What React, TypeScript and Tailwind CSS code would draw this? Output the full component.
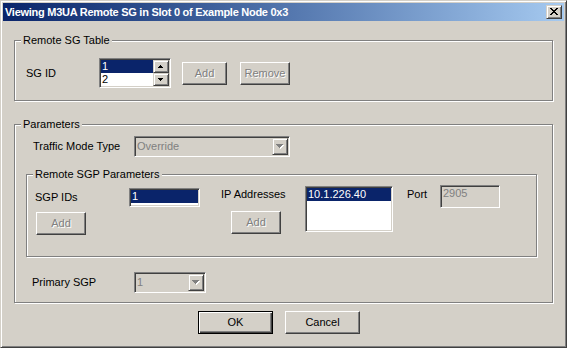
import React from "react";

const FONT = "font-['Liberation_Sans',Arial,sans-serif]";
const SUNKEN =
  "border border-t-[#808080] border-l-[#808080] border-r-white border-b-white shadow-[inset_1px_1px_0_#404040,inset_-1px_-1px_0_#d4d0c8] p-[1px]";
const RAISED =
  "border border-t-[#d4d0c8] border-l-[#d4d0c8] border-r-[#404040] border-b-[#404040] shadow-[inset_1px_1px_0_#fff,inset_-1px_-1px_0_#808080] bg-[#d4d0c8]";
const BUTTON =
  "border border-t-white border-l-white border-r-[#404040] border-b-[#404040] shadow-[inset_-1px_-1px_0_#808080] bg-[#d4d0c8]";
const DISABLED_TEXT = "text-[#808080] [text-shadow:1px_1px_0_#fff]";

const Arrow = ({ dir, w, disabled }: { dir: "up" | "down"; w: number; disabled?: boolean }) => {
  const h = Math.ceil(w / 2);
  const rows = Array.from({ length: h }, (_, i) => i);
  const draw = (dx: number, fill: string) =>
    rows.map((i) => (
      <rect
        key={`${fill}-${i}`}
        x={i + dx}
        y={(dir === "down" ? i : h - 1 - i) + dx}
        width={w - 2 * i}
        height={1}
        fill={fill}
      />
    ));
  return (
    <svg width={w + 1} height={h + 1} shapeRendering="crispEdges">
      {disabled && draw(1, "#fff")}
      {draw(0, disabled ? "#808080" : "#000")}
    </svg>
  );
};

const CloseGlyph = () => {
  const rows: [number, number][][] = [
    [[0, 2], [6, 2]],
    [[1, 2], [5, 2]],
    [[2, 4]],
    [[3, 2]],
    [[2, 4]],
    [[1, 2], [5, 2]],
    [[0, 2], [6, 2]],
  ];
  return (
    <svg width={8} height={7} shapeRendering="crispEdges">
      {rows.map((segs, y) =>
        segs.map(([x, w]) => <rect key={`${y}-${x}`} x={x} y={y} width={w} height={1} fill="#000" />)
      )}
    </svg>
  );
};

const GroupBox = ({ title, className, children }: { title: string; className: string; children?: React.ReactNode }) => (
  <div className={`relative border border-[#808080] shadow-[1px_1px_0_#fff,inset_1px_1px_0_#fff] ${className}`}>
    <span className="absolute -top-[7px] left-[6px] bg-[#d4d0c8] px-[2px] leading-[13px] whitespace-nowrap">{title}</span>
    {children}
  </div>
);

const Button = ({ label, className, disabled }: { label: string; className: string; disabled?: boolean }) => (
  <div className={`${BUTTON} flex items-center justify-center ${disabled ? DISABLED_TEXT : ""} ${className}`}>
    {label}
  </div>
);

const Combo = ({ value, className }: { value: string; className: string }) => (
  <div className={`${SUNKEN} flex bg-[#d4d0c8] h-[21px] ${className}`}>
    <div className="flex-1 flex items-center pl-[1px] text-[#808080]">{value}</div>
    <div className={`${RAISED} w-[16px] h-[17px] flex items-center justify-center`}>
      <Arrow dir="down" w={7} disabled />
    </div>
  </div>
);

export default function App() {
  return (
    <div
      className={`w-[567px] h-[348px] bg-[#d4d0c8] border border-t-[#d4d0c8] border-l-[#d4d0c8] border-r-[#404040] border-b-[#404040] shadow-[inset_1px_1px_0_#fff,inset_-1px_-1px_0_#808080] p-[2px] text-[11px] leading-[13px] text-black ${FONT}`}
    >
      {/* caption */}
      <div className="h-[18px] flex items-center justify-between px-[2px] bg-linear-to-r from-[#0a246a] to-[#a6caf0]">
        <span className="text-white font-bold whitespace-nowrap tracking-[-0.27px]">Viewing M3UA Remote SG in Slot 0 of Example Node 0x3</span>
        <div className={`${RAISED} w-[16px] h-[14px] pl-[3px] pt-[2px]`}>
          <CloseGlyph />
        </div>
      </div>

      <GroupBox title="Remote SG Table" className="ml-[11px] mt-[19px] w-[539px] h-[61px] pt-[17px] pl-[11px]">
        <div className="flex items-center h-[30px]">
          <span className="w-[73px]">SG ID</span>
          <div className={`${SUNKEN} flex bg-white w-[72px] h-[30px]`}>
            <div className="flex-1 flex flex-col">
              <div className="h-[13px] bg-[#0a246a] text-white pl-[1px]">1</div>
              <div className="h-[13px] pl-[1px]">2</div>
            </div>
            <div className="flex flex-col">
              <div className={`${RAISED} w-[16px] h-[13px] flex items-center justify-center`}>
                <Arrow dir="up" w={5} />
              </div>
              <div className={`${RAISED} w-[16px] h-[13px] flex items-center justify-center`}>
                <Arrow dir="down" w={5} />
              </div>
            </div>
          </div>
          <Button label="Add" disabled className="ml-[11px] w-[45px] h-[23px]" />
          <Button label="Remove" disabled className="ml-[13px] w-[50px] h-[23px]" />
        </div>
      </GroupBox>

      <GroupBox title="Parameters" className="ml-[11px] mt-[23px] w-[539px] h-[179px] pt-[11px]">
        <div className="flex items-center h-[21px] pl-[18px]">
          <span className="w-[101px]">Traffic Mode Type</span>
          <Combo value="Override" className="w-[156px]" />
        </div>

        <GroupBox title="Remote SGP Parameters" className="ml-[11px] mt-[17px] w-[511px] h-[83px] flex items-start pl-[8px]">
          <div className="w-[94px] flex flex-col items-start">
            <span className="mt-[16px]">SGP IDs</span>
            <Button label="Add" disabled className="mt-[8px] ml-[1px] w-[50px] h-[23px]" />
          </div>
          <div className={`${SUNKEN} mt-[13px] w-[71px] h-[19px] bg-white`}>
            <div className="h-[13px] bg-[#0a246a] text-white pl-[1px]">1</div>
          </div>
          <div className="ml-[21px] w-[84px] flex flex-col items-start">
            <span className="mt-[13px]">IP Addresses</span>
            <Button label="Add" disabled className="mt-[10px] ml-[10px] w-[50px] h-[23px]" />
          </div>
          <div className={`${SUNKEN} mt-[11px] w-[88px] h-[46px] bg-white`}>
            <div className="h-[13px] bg-[#0a246a] text-white pl-[1px]">10.1.226.40</div>
          </div>
          <span className="ml-[14px] mt-[13px] w-[33px]">Port</span>
          <div className={`${SUNKEN} mt-[10px] w-[60px] h-[23px] bg-[#d4d0c8] pl-[2px] pt-[1px] text-[#808080]`}>2905</div>
        </GroupBox>

        <div className="flex items-center h-[21px] pl-[17px] mt-[15px]">
          <span className="w-[102px]">Primary SGP</span>
          <Combo value="1" className="w-[72px]" />
        </div>
      </GroupBox>

      <div className="flex mt-[8px] ml-[195px] gap-[12px]">
        <div className="border border-black">
          <div className="w-[73px] h-[21px] bg-[#d4d0c8] shadow-[inset_1px_1px_0_#fff,inset_-1px_-1px_0_#404040,inset_-2px_-2px_0_#808080] flex items-center justify-center">
            OK
          </div>
        </div>
        <Button label="Cancel" className="w-[75px] h-[23px]" />
      </div>
    </div>
  );
}
